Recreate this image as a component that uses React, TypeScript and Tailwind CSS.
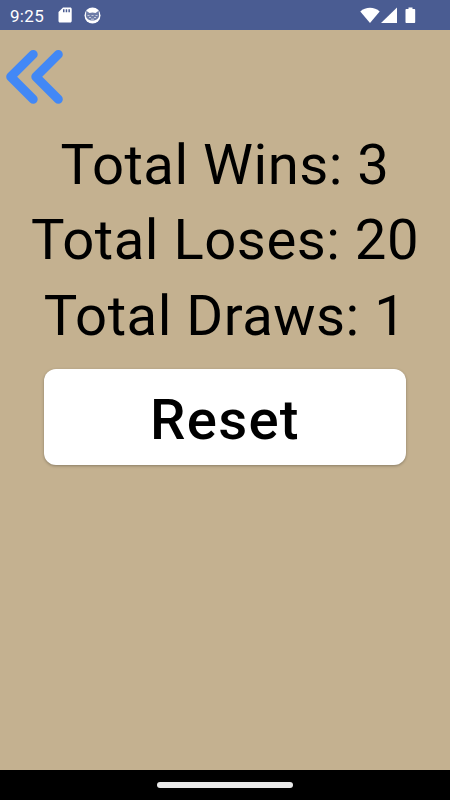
interface Stat {
  label: string;
  value: number;
}

const stats: Stat[] = [
  { label: 'Total Wins', value: 3 },
  { label: 'Total Loses', value: 20 },
  { label: 'Total Draws', value: 1 },
];

function StatusBar() {
  return (
    <header className="flex h-[30px] shrink-0 items-center bg-[#4a5c92] pl-[10px] text-white">
      <span className="w-[48px] pt-[2px] text-[17px] leading-[28px] tracking-[0.3px]">9:25</span>

      {/* SD card */}
      <svg className="mr-[12px] h-[16px] w-[14px]" viewBox="0 0 14 16" fill="currentColor">
        <path
          fillRule="evenodd"
          d="M5 0.5h7.2c.9 0 1.5.6 1.5 1.5v12c0 .9-.6 1.5-1.5 1.5H2c-.9 0-1.5-.6-1.5-1.5V5zM5 2.2v3h1.5v-3zM7.7 2.2v3h1.5v-3zM10.4 2.2v3h1.5v-3z"
        />
      </svg>

      {/* Cat notification */}
      <svg className="h-[17px] w-[17px]" viewBox="0 0 17 17">
        <circle cx="8.5" cy="8.5" r="8" fill="currentColor" />
        <path
          d="M2.3 3.8 5.5 6Q8.5 5.2 11.5 6l3.2-2.2.4 4.7c-.3 3.2-3 5-6.6 5S2.2 11.7 1.9 8.5z"
          fill="#4a5c92"
          fillOpacity="0.8"
        />
        <path
          d="M3.5 8.5h2M7.5 8.5h2M11.5 8.5h2M5 10.5h2M10 10.5h2M7 12.2h3"
          stroke="currentColor"
          strokeWidth="1"
          strokeOpacity="0.6"
        />
      </svg>

      <div className="ml-auto flex items-center pr-[34px]">
        <svg className="mr-[1px] h-[17px] w-[20px]" viewBox="0 0 20 17" fill="currentColor">
          <path d="M10 16 0.3 4.6C5.5-.4 14.500-.4 19.700 4.600z" />
        </svg>
        <svg className="mr-[8px] h-[17px] w-[16px]" viewBox="0 0 16 17" fill="currentColor">
          <path d="M0 16 16 0.600v15.400z" />
        </svg>
        <svg className="h-[17px] w-[11px]" viewBox="0 0 11 17" fill="currentColor">
          <path d="M3.5 0.5h4v1.600h1.700c.6 0 1 .4 1 1v12c0 .6-.4 1-1 1H1.500c-.6 0-1-.4-1-1V3.100c0-.6.4-1 1-1h2z" />
        </svg>
      </div>
    </header>
  );
}

function BackButton() {
  return (
    <button type="button" aria-label="Back" className="mt-[14px] ml-[4px] block h-[64px] w-[64px]">
      <svg
        className="h-[64px] w-[64px]"
        viewBox="0 0 64 64"
        fill="none"
        stroke="#4288f6"
        strokeWidth="9"
        strokeLinecap="round"
        strokeLinejoin="round"
      >
        <path d="M29.2 10.4 6.7 32.8 29.2 55.3" />
        <path d="M54.3 10.4 31.8 32.8 54.3 55.3" />
      </svg>
    </button>
  );
}

export default function App() {
  return (
    <div className="flex h-screen w-full flex-col overflow-hidden bg-[#c4b190] font-[Roboto,sans-serif] text-black">
      <StatusBar />

      <main className="flex-1">
        <BackButton />

        <div className="mt-[19.6px] text-center text-[56.25px] leading-[75.7px] tracking-[0.5px]">
          {stats.map((stat) => (
            <p key={stat.label} className="whitespace-nowrap">
              {stat.label}: {stat.value}
            </p>
          ))}
        </div>

        <div className="mt-[14.7px] flex justify-center">
          <button
            type="button"
            className="h-[95.5px] w-[362.5px] rounded-[12px] bg-white pt-[5.5px] text-[56.25px] leading-[90px] font-medium tracking-[1.3px] shadow-[0_1px_3px_rgba(0,0,0,0.3)]"
          >
            Reset
          </button>
        </div>
      </main>

      {/* Gesture navigation */}
      <footer className="flex h-[30px] shrink-0 items-center justify-center bg-black">
        <div className="h-[5.5px] w-[136px] rounded-full bg-[#e9e9e9]" />
      </footer>
    </div>
  );
}
